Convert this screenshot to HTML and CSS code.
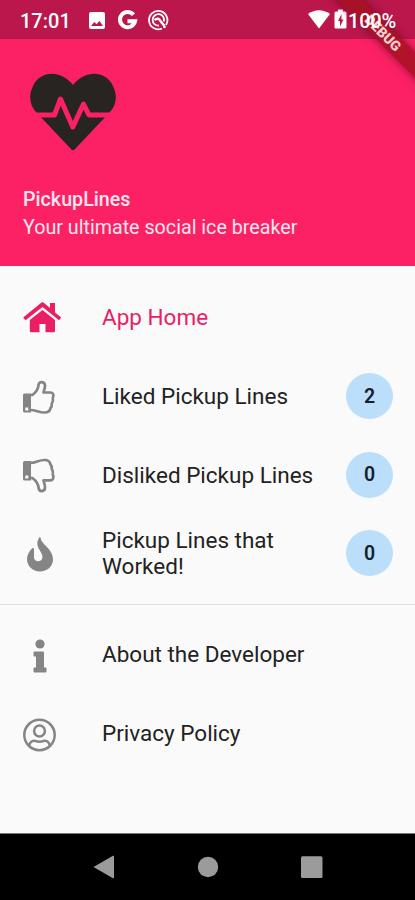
FILE: index.html
```html
<!DOCTYPE html>
<html lang="en">
<head>
    <meta charset="utf-8">
    <title>PickupLines</title>
    <link rel="stylesheet" href="styles.css">
</head>
<body>
    <div class="screen">
        <div class="status-bar">
            <span class="time">17:01</span>
            <svg class="status-icons" width="90" height="39" viewBox="0 0 90 39">
                <path fill="#fff" fill-rule="evenodd" d="M6 12h12q2 0 2 2v13q0 2-2 2H6q-2 0-2-2V14q0-2 2-2zM6 26h12l-3.500-5-3 3.300-2.200-2.300z"/>
                <path fill="none" stroke="#fff" stroke-width="4" d="M48.500 14.800A7.600 7.600 0 1 0 50 21.300H42.500"/>
                <g fill="none" stroke="#fff" stroke-width="1.8">
                    <path d="M77 28.500A9.200 9.200 0 1 1 81 25"/>
                    <path d="M74 25.500A5.700 5.700 0 1 1 78.800 21.500"/>
                    <path stroke-width="2.400" d="M69.500 20q4-3 6 1l4 5"/>
                </g>
                <circle cx="79.500" cy="27" r="1.300" fill="#fff"/>
            </svg>
            <div class="right">
                <svg width="41" height="39" viewBox="0 0 41 39">
                    <path fill="#fff" d="M-1 14Q10 6.500 21 14L10 28.500z"/>
                    <path fill="#fff" fill-rule="evenodd" d="M29 9.500h5v2h2q1.500 0 1.500 1.500V27q0 1.500-1.500 1.500h-9q-1.500 0-1.500-1.500V13Q25.500 11.500 27 11.500h2zM32.500 14l-3.500 7h2v5.500l3.500-7h-2z"/>
                </svg>
                <span>100%</span>
            </div>
        </div>
        <div class="debug"><span>DEBUG</span></div>

        <div class="header">
            <svg class="logo" width="88" height="80" viewBox="0 0 88 80">
                <path fill="#272422" d="M44 12C57-4 77-2 84 13C89 23 87 32 81 39L46 76Q44 78.500 42 76L7 39C1 32-1 23 4 13C11-2 31-4 44 12z"/>
                <path fill="none" stroke="#fc2065" stroke-width="5" stroke-linejoin="round" d="M3 42H25.500L31.500 26L43.800 54L54.500 31L60 42H85"/>
            </svg>
            <div class="name">PickupLines</div>
            <div class="tagline">Your ultimate social ice breaker</div>
        </div>

        <div class="menu">
            <div class="item active">
                <svg width="44" height="40" viewBox="0 0 44 40">
                    <path fill="currentColor" d="M21.500 5.500q1-.6 2 0L30 11V6h5v9.500l6.300 5-2.300 2.700L22.500 10 5.500 23.200l-2.300-2.700z"/>
                    <path fill="currentColor" d="M22.500 13L35 23v11q0 1.300-1.300 1.300H25.500V27h-6v8.300h-8.300Q9.800 35.300 9.800 34V23z"/>
                </svg>
                <span class="label">App Home</span>
            </div>
            <div class="item">
                <svg width="44" height="40" viewBox="0 0 44 40">
                    <path fill="currentColor" fill-rule="evenodd" d="M4.500 17.500H11V36.500H4.500Q3 36.500 3 35V19q0-1.500 1.500-1.500zM5.300 31.500v3h3v-3z"/>
                    <path fill="none" stroke="currentColor" stroke-width="2.700" stroke-linejoin="round" d="M10 19H12.500C15 17 18.300 13.500 18.500 9C19 4.500 25 5.500 25 9.500C25 12.500 24 14 23.500 16.500H30.500C33.500 16.500 34 20 32.800 22C33.300 24 32.800 26 31.800 27.500C32 30 31.500 31 30.500 32C30 35.500 28 36.500 24.500 36.500C18 36.500 16.500 34 10 34"/>
                </svg>
                <span class="label">Liked Pickup Lines</span>
                <span class="badge">2</span>
            </div>
            <div class="item">
                <svg width="44" height="40" viewBox="0 0 44 40">
                    <path fill="currentColor" fill-rule="evenodd" d="M4.500 6H11V25.500H4.500Q3 25.500 3 24V7.500Q3 6 4.500 6zM5.300 20.500v3h3v-3z"/>
                    <path fill="none" stroke="currentColor" stroke-width="2.700" stroke-linejoin="round" d="M10 8C16.500 8 18 5 24.500 5C28 5 30 6.500 30.500 9.500C31.500 10.500 32 12 31.800 14C32.800 15.500 33.300 17.500 32.800 19.500C34 21.500 33.500 25.300 30.500 25.300H23.500C24 28 25 29.500 25 32.500C25 37 19 37.500 18.500 32.500C18.300 28.500 15 25 12.500 23H10"/>
                </svg>
                <span class="label">Disliked Pickup Lines</span>
                <span class="badge">0</span>
            </div>
            <div class="item">
                <svg width="44" height="40" viewBox="0 0 44 40">
                    <path fill="currentColor" d="M20.500 4.500C21 11.500 33 15.500 33 26.500C33 33.500 27 38.500 20 38.500C13 38.500 7 33.500 7 26C7 21.500 9.500 18 12.500 15Q14 14.500 14 16V24.500C14 29.500 22.500 29.500 22.500 24C22.500 18 13.500 13.500 19.300 4.500Q20 3.500 20.500 4.500z"/>
                </svg>
                <span class="label">Pickup Lines that Worked!</span>
                <span class="badge">0</span>
            </div>
        </div>
        <div class="menu more">
            <div class="item">
                <svg width="44" height="40" viewBox="0 0 44 40">
                    <circle cx="20" cy="10" r="4.600" fill="currentColor"/>
                    <path fill="currentColor" d="M14.500 17.500H23q1 0 1 1V33.500h1.500q1 0 1 1v3q0 1-1 1h-11q-1 0-1-1V34.500q0-1 1-1H16V22.500h-1.500q-1 0-1-1V18.500q0-1 1-1z"/>
                </svg>
                <span class="label">About the Developer</span>
            </div>
            <div class="item">
                <svg width="44" height="40" viewBox="0 0 44 40">
                    <g fill="none" stroke="currentColor" stroke-width="2.500">
                        <circle cx="19.500" cy="22" r="15.200"/>
                        <circle cx="19.500" cy="18" r="5.400"/>
                        <path d="M9 33C10 28.500 13 27.500 15 27.800Q19.500 29.500 24 27.800C26 27.500 29 28.500 30 33"/>
                    </g>
                </svg>
                <span class="label">Privacy Policy</span>
            </div>
        </div>

        <div class="nav-bar">
            <svg width="22" height="24" viewBox="0 0 22 24"><path fill="#9b9b9b" d="M.5 12L20 .800q1-.5 1 .5V22.700q0 1-1 .5z"/></svg>
            <svg width="22" height="24" viewBox="0 0 22 24"><circle cx="11" cy="12" r="10.200" fill="#9b9b9b"/></svg>
            <svg width="22" height="24" viewBox="0 0 22 24"><rect y="1.300" width="21.500" height="21.700" rx="1.500" fill="#9b9b9b"/></svg>
        </div>
    </div>
</body>
</html>
```

FILE: styles.css
```css
* { box-sizing: border-box; }
body { margin: 0; font-family: Roboto, sans-serif; }
svg { display: block; flex: none; }
.screen { position: relative; width: 415px; height: 900px; overflow: hidden; display: flex; flex-direction: column; background: #fafafa; }

.status-bar { display: flex; align-items: center; height: 39px; padding: 0 19px 0 20px; background: #bb174c; color: #fff; }
.time { width: 65px; padding-top: 2px; font-size: 20px; font-weight: 500; }
.right { display: flex; align-items: center; margin-left: auto; }
.right svg { margin-right: -2px; overflow: visible; }
.right span { position: relative; z-index: 2; padding-top: 3px; font-size: 20px; font-weight: 500; letter-spacing: -0.2px; }

/* corner ribbon, lies over both bars */
.debug { position: absolute; top: 24px; right: -68px; width: 200px; height: 18px; transform: rotate(45deg); background: rgba(165, 18, 32, 0.85); box-shadow: 0 0 10px rgba(80, 0, 20, 0.6); color: #f6cdd2; font-size: 14px; font-weight: 900; line-height: 18px; text-align: center; }

.header { height: 227px; padding: 34px 23px 0; background: #fc2065; color: #ffe6ee; }
.logo { margin-left: 6px; }
.name { margin-top: 33px; font-size: 19.7px; font-weight: 500; line-height: 28px; }
.tagline { font-size: 19.7px; line-height: 28px; }

.menu { padding: 12px 22px 11px 20px; }
.item { display: flex; align-items: center; height: 78.7px; color: #858585; }
.label { flex: 1; margin-left: 38px; padding-right: 30px; color: #222; font-size: 22.5px; line-height: 26px; }
.active, .active .label { color: #e91e63; }
.badge { display: flex; align-items: center; justify-content: center; width: 47px; height: 46px; border-radius: 50%; background: #bbdefb; color: #15202b; font-size: 19.5px; font-weight: 600; }
.more { padding-top: 10px; border-top: 1px solid #dedede; }

.nav-bar { display: flex; justify-content: center; gap: 82px; height: 67px; margin-top: auto; padding-top: 21px; background: #000; border-top: 1px solid #777; }
```
